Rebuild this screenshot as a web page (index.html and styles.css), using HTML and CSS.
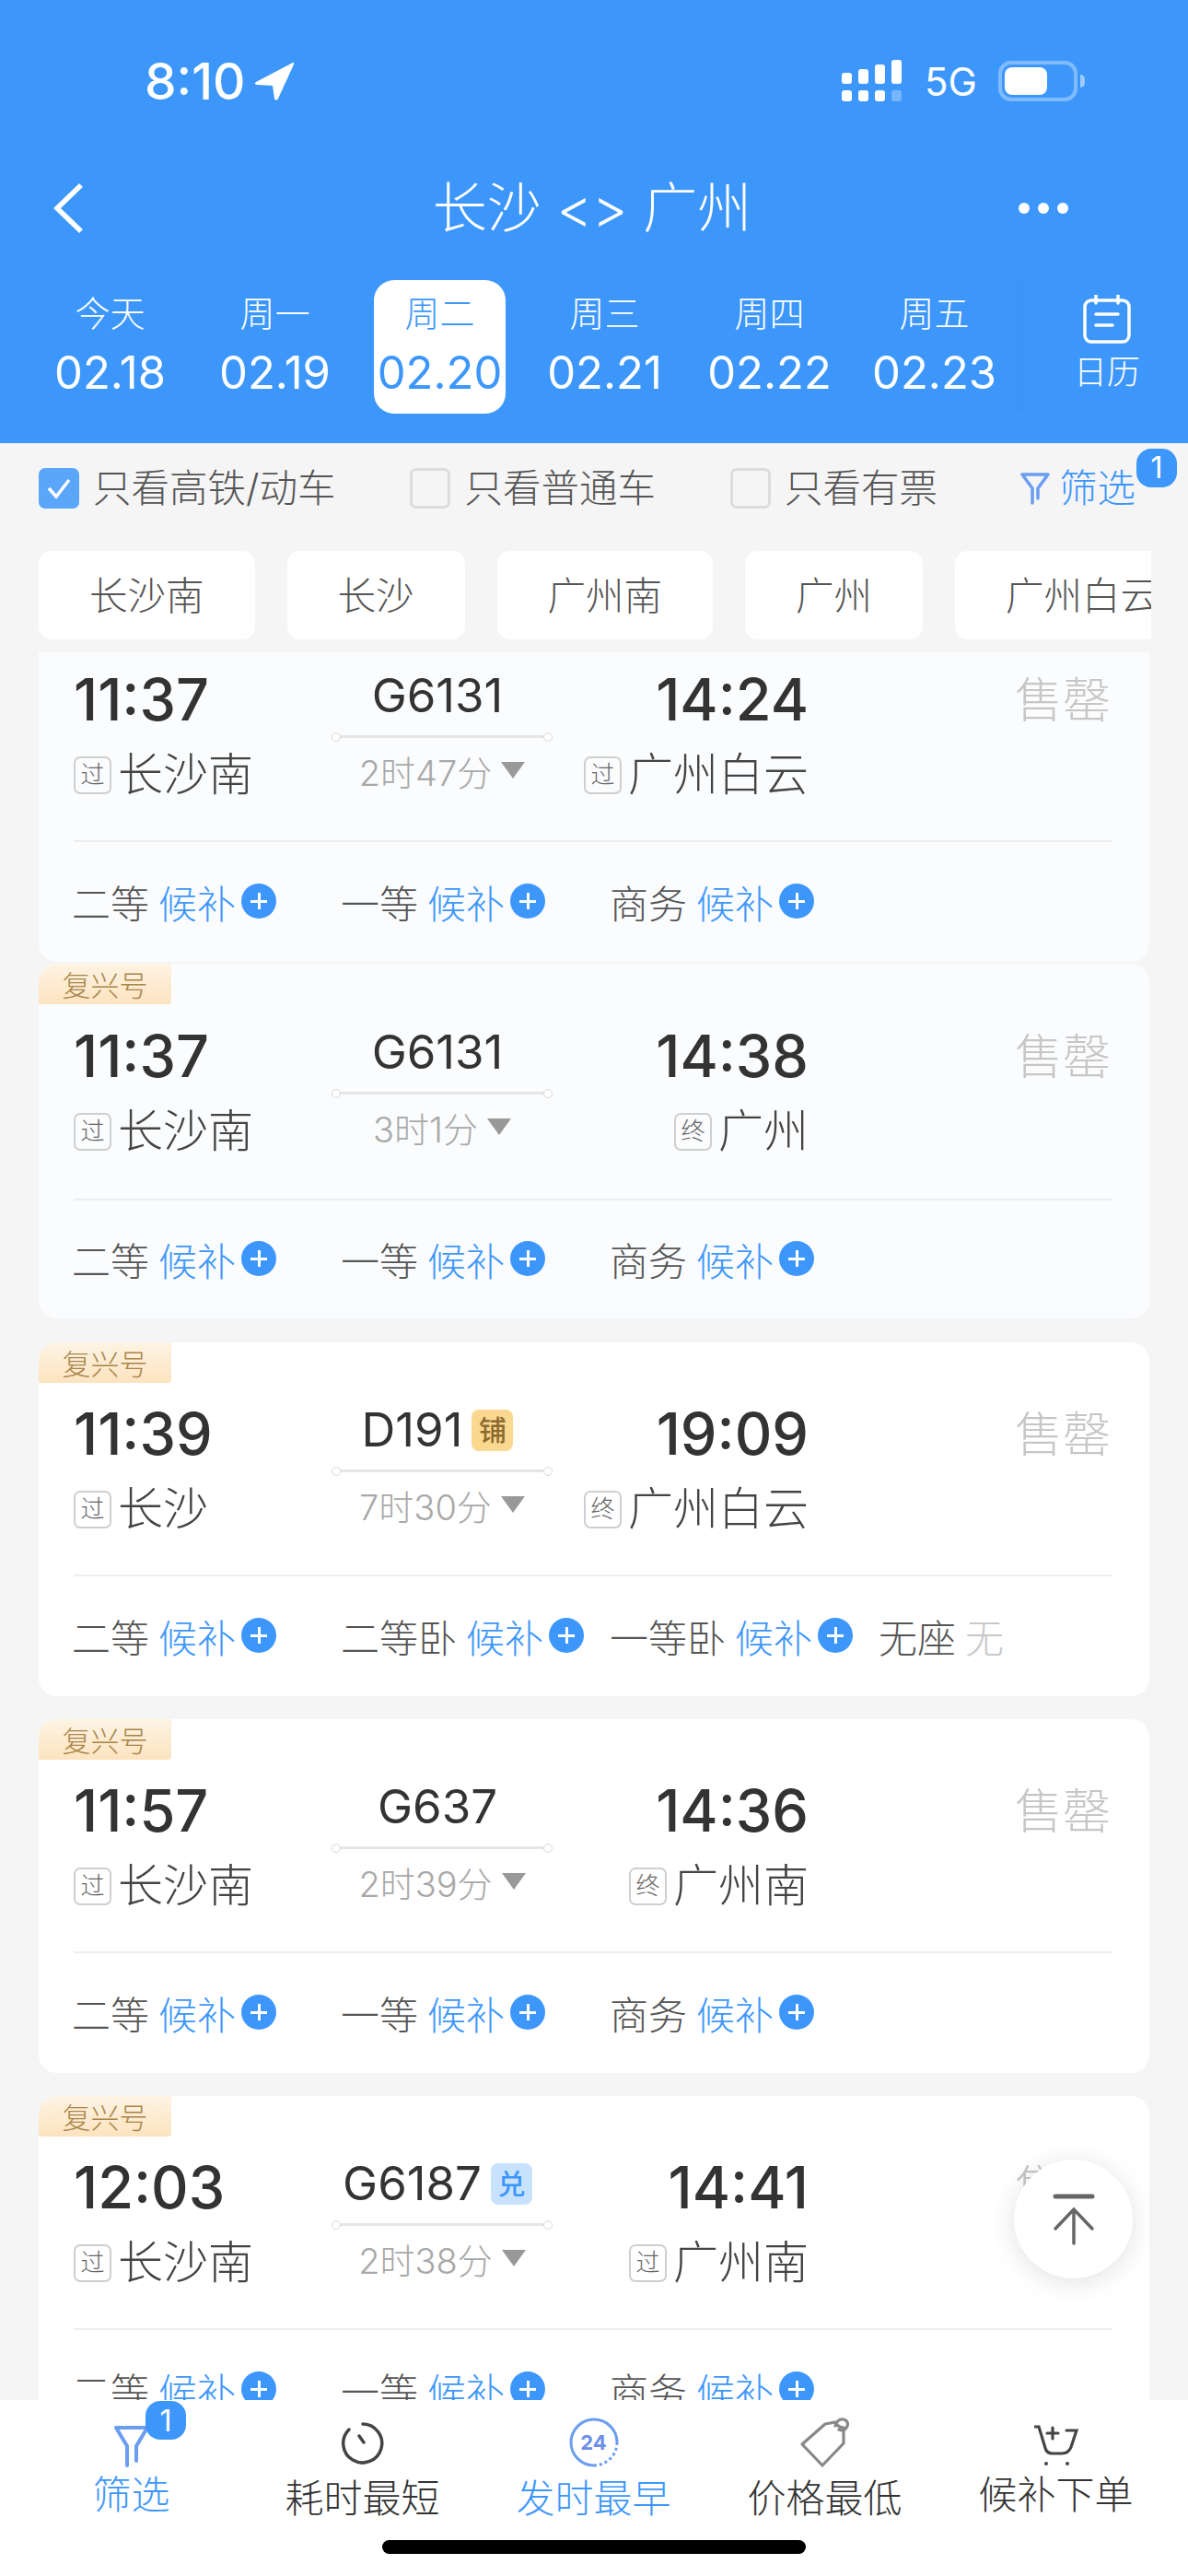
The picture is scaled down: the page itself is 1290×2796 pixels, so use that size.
FILE: index.html
```html
<!DOCTYPE html>
<html lang="zh-CN">
<head>
<meta charset="utf-8">
<title>长沙 &lt;&gt; 广州</title>
<link rel="stylesheet" href="styles.css">
</head>
<body>
<div class="page">
  <header class="header">
    <div class="status">
      <div class="clock">8:10</div>
      <svg class="loc" width="44" height="42" viewBox="0 0 44 42"><path d="M42 1 2 22c-2 1-1 3 1 3l17 1 2 14c0 2 3 2 4 0L43 3c.5-1.500-.5-2.500-1-2Z" fill="#fff"/></svg>
      <svg class="signal" width="66" height="46" viewBox="0 0 66 46" fill="#fff"><rect x="0" y="14" width="11" height="12" rx="3"/><rect x="18" y="10" width="11" height="16" rx="3"/><rect x="36" y="5" width="11" height="21" rx="3"/><rect x="54" y="0" width="11" height="26" rx="3"/><rect x="0" y="33" width="11" height="12" rx="3"/><rect x="18" y="33" width="11" height="12" rx="3"/><rect x="36" y="33" width="11" height="12" rx="3"/><rect x="54" y="33" width="11" height="12" rx="3" opacity=".3"/></svg>
      <div class="net">5G</div>
      <div class="battery"><div class="battery-fill"></div></div>
      <div class="battery-nub"></div>
    </div>
    <nav class="nav">
      <svg class="back" width="36" height="56" viewBox="0 0 36 56"><path d="M32 3 6 28l26 25" fill="none" stroke="#fff" stroke-width="5.500"/></svg>
      <div class="title">长沙 &lt;&gt; 广州</div>
      <div class="more"><i></i><i></i><i></i></div>
    </nav>
    <div class="tabs">
      <div class="tab"><div class="tab-day">今天</div><div class="tab-date">02.18</div></div>
      <div class="tab"><div class="tab-day">周一</div><div class="tab-date">02.19</div></div>
      <div class="tab tab-on"><div class="tab-day">周二</div><div class="tab-date">02.20</div></div>
      <div class="tab"><div class="tab-day">周三</div><div class="tab-date">02.21</div></div>
      <div class="tab"><div class="tab-day">周四</div><div class="tab-date">02.22</div></div>
      <div class="tab"><div class="tab-day">周五</div><div class="tab-date">02.23</div></div>
      <div class="cal">
        <svg width="54" height="54" viewBox="0 0 54 54" fill="none" stroke="#fff" stroke-width="3.500" stroke-linecap="round"><rect x="3" y="6" width="48" height="45" rx="7"/><path d="M15 1v8M39 1v8M15 21h24M15 33h18"/></svg>
        <div class="cal-text">日历</div>
      </div>
    </div>
  </header>

  <div class="filters">
    <label class="check check-first"><span class="box box-on"><svg width="28" height="24" viewBox="0 0 28 24"><path d="M3 12l8 9L25 3" fill="none" stroke="#fff" stroke-width="3.500"/></svg></span>只看高铁/动车</label>
    <label class="check check-next"><span class="box"></span>只看普通车</label>
    <label class="check check-next"><span class="box"></span>只看有票</label>
    <div class="filter-link">
      <svg width="32" height="36" viewBox="0 0 32 36" fill="none" stroke="#6b9df0" stroke-width="3.500" stroke-linejoin="round" stroke-linecap="round"><path d="M2 3h28L19 18v11M13 34V18L2 3"/></svg>
      筛选
      <span class="count count-top">1</span>
    </div>
  </div>

  <div class="chips">
    <div class="chip">长沙南</div>
    <div class="chip">长沙</div>
    <div class="chip">广州南</div>
    <div class="chip">广州</div>
    <div class="chip">广州白云</div>
  </div>

  <main class="list">
    <article class="card card-first card-tint">
      <div class="main">
        <div class="col"><div class="time">11:37</div><div class="station"><span class="mark">过</span>长沙南</div></div>
        <div class="mid"><div class="train">G6131</div><div class="rail"></div><div class="dur">2时47分<i class="tri"></i></div></div>
        <div class="col col-end"><div class="time">14:24</div><div class="station"><span class="mark">过</span>广州白云</div></div>
        <div class="sold">售罄</div>
      </div>
      <div class="seats">
        <div class="seat">二等<span class="wait">候补</span><i class="plus"></i></div>
        <div class="seat">一等<span class="wait">候补</span><i class="plus"></i></div>
        <div class="seat">商务<span class="wait">候补</span><i class="plus"></i></div>
      </div>
    </article>

    <article class="card card-tint card-wide">
      <div class="tag">复兴号</div>
      <div class="main">
        <div class="col"><div class="time">11:37</div><div class="station"><span class="mark">过</span>长沙南</div></div>
        <div class="mid"><div class="train">G6131</div><div class="rail"></div><div class="dur">3时1分<i class="tri"></i></div></div>
        <div class="col col-end"><div class="time">14:38</div><div class="station"><span class="mark">终</span>广州</div></div>
        <div class="sold">售罄</div>
      </div>
      <div class="seats">
        <div class="seat">二等<span class="wait">候补</span><i class="plus"></i></div>
        <div class="seat">一等<span class="wait">候补</span><i class="plus"></i></div>
        <div class="seat">商务<span class="wait">候补</span><i class="plus"></i></div>
      </div>
    </article>

    <article class="card">
      <div class="tag">复兴号</div>
      <div class="main">
        <div class="col"><div class="time">11:39</div><div class="station"><span class="mark">过</span>长沙</div></div>
        <div class="mid"><div class="train">D191<span class="kind kind-gold">铺</span></div><div class="rail"></div><div class="dur">7时30分<i class="tri"></i></div></div>
        <div class="col col-end"><div class="time">19:09</div><div class="station"><span class="mark">终</span>广州白云</div></div>
        <div class="sold">售罄</div>
      </div>
      <div class="seats">
        <div class="seat">二等<span class="wait">候补</span><i class="plus"></i></div>
        <div class="seat">二等卧<span class="wait">候补</span><i class="plus"></i></div>
        <div class="seat">一等卧<span class="wait">候补</span><i class="plus"></i></div>
        <div class="seat">无座<span class="none">无</span></div>
      </div>
    </article>

    <article class="card">
      <div class="tag">复兴号</div>
      <div class="main">
        <div class="col"><div class="time">11:57</div><div class="station"><span class="mark">过</span>长沙南</div></div>
        <div class="mid"><div class="train">G637</div><div class="rail"></div><div class="dur">2时39分<i class="tri"></i></div></div>
        <div class="col col-end"><div class="time">14:36</div><div class="station"><span class="mark">终</span>广州南</div></div>
        <div class="sold">售罄</div>
      </div>
      <div class="seats">
        <div class="seat">二等<span class="wait">候补</span><i class="plus"></i></div>
        <div class="seat">一等<span class="wait">候补</span><i class="plus"></i></div>
        <div class="seat">商务<span class="wait">候补</span><i class="plus"></i></div>
      </div>
    </article>

    <article class="card">
      <div class="tag">复兴号</div>
      <div class="main">
        <div class="col"><div class="time">12:03</div><div class="station"><span class="mark">过</span>长沙南</div></div>
        <div class="mid"><div class="train">G6187<span class="kind kind-blue">兑</span></div><div class="rail"></div><div class="dur">2时38分<i class="tri"></i></div></div>
        <div class="col col-end"><div class="time">14:41</div><div class="station"><span class="mark">过</span>广州南</div></div>
        <div class="sold">售罄</div>
      </div>
      <div class="seats">
        <div class="seat">二等<span class="wait">候补</span><i class="plus"></i></div>
        <div class="seat">一等<span class="wait">候补</span><i class="plus"></i></div>
        <div class="seat">商务<span class="wait">候补</span><i class="plus"></i></div>
      </div>
    </article>
  </main>

  <footer class="bar">
    <div class="bar-item bar-blue bar-raise">
      <span class="count count-bar">1</span>
      <svg width="40" height="46" viewBox="0 0 40 46" fill="none" stroke="#6b9df0" stroke-width="4" stroke-linecap="round" stroke-linejoin="round"><path d="M3 3h34L25 23v16M15 44V23L3 3"/></svg>
      <div class="bar-text">筛选</div>
    </div>
    <div class="bar-item">
      <svg width="48" height="54" viewBox="0 0 48 54" fill="none" stroke="#444" stroke-width="3.500" stroke-linecap="round"><path d="M9 13a21 21 0 1 0 15-6"/><path d="M20 20l5 7"/></svg>
      <div class="bar-text">耗时最短</div>
    </div>
    <div class="bar-item bar-blue">
      <div class="ring">
        <svg width="54" height="54" viewBox="0 0 54 54" fill="none" stroke="#6b9df0" stroke-width="3"><path d="M52 27A25 25 0 1 0 27 52"/><path d="M52 27A25 25 0 0 1 27 52" stroke-dasharray="3 3"/></svg>
        <span class="ring-text">24</span>
      </div>
      <div class="bar-text">发时最早</div>
    </div>
    <div class="bar-item">
      <svg width="56" height="54" viewBox="0 0 56 54" fill="none" stroke="#888" stroke-width="3.200" stroke-linejoin="round" stroke-linecap="round"><path d="M3 29 28 7l11-2c2 4 4 5 9 6v17L25 52Z"/><path d="M39 9c1-5 5-8 9-7s6 5 3 9-6 3-8 2"/></svg>
      <div class="bar-text">价格最低</div>
    </div>
    <div class="bar-item bar-raise">
      <svg width="48" height="46" viewBox="0 0 48 46" fill="none" stroke="#444" stroke-width="3.200" stroke-linecap="round"><path d="M1 2h4l7 23c1 4 3 6 8 6h10c5 0 8-2 10-7l6-18H35"/><path d="M20 3v12M14 9h12"/><circle cx="13" cy="42" r="2" fill="#444" stroke="none"/><circle cx="36" cy="42" r="2" fill="#444" stroke="none"/></svg>
      <div class="bar-text">候补下单</div>
    </div>
    <div class="home"></div>
  </footer>

  <div class="totop">
    <svg width="46" height="56" viewBox="0 0 46 56" fill="none" stroke="#666" stroke-linecap="round"><path d="M3 3h40" stroke-width="5"/><path d="M23 54V17M3 38 23 17l20 21" stroke-width="3.500"/></svg>
  </div>
</div>
</body>
</html>
```
FILE: styles.css
```css
* { box-sizing: border-box; }
html, body { margin: 0; padding: 0; }
body {
  width: 1290px;
  height: 2796px;
  overflow: hidden;
  font-family: Inter, "Noto Sans CJK SC", sans-serif;
  color: #444;
}
.page {
  position: relative;
  width: 1290px;
  height: 2796px;
  background: #f5f5f6;
  display: flex;
  flex-direction: column;
  overflow: hidden;
}

/* Header */
.header { height: 481px; background: #3d97fb; color: #fff; flex: none; }
.status { height: 176px; display: flex; align-items: center; padding: 0 0 0 157px; }
.clock { font-size: 55px; font-weight: 500; line-height: 60px; width: 119px; }
.signal { margin-left: 594px; }
.net { font-size: 42px; margin-left: 24px; width: 58px; }
.battery { width: 86px; height: 44px; margin-left: 22px; border: 4px solid rgba(255,255,255,.35); border-radius: 14px; padding: 3px; }
.battery-fill { width: 46px; height: 100%; background: #fff; border-radius: 8px; }
.battery-nub { width: 5px; height: 14px; margin-left: 3px; background: rgba(255,255,255,.5); border-radius: 0 6px 6px 0; }
.nav { height: 100px; display: flex; align-items: center; padding: 0 130px 0 56px; }
.back { flex: none; }
.title { flex: 1; text-align: center; font-size: 59px; font-weight: 300; line-height: 80px; padding-left: 88px; white-space: nowrap; }
.more { display: flex; gap: 9px; }
.more i { width: 12px; height: 12px; background: #fff; border-radius: 50%; display: block; }
.tabs { margin-top: 28px; padding-left: 30px; display: grid; grid-template-columns: repeat(6, 179px) 1fr; height: 145px; }
.tab { width: 143px; height: 145px; justify-self: center; padding-top: 11px; text-align: center; border-radius: 22px; }
.tab-day { font-size: 38px; line-height: 50px; font-weight: 300; white-space: nowrap; }
.tab-date { font-size: 49px; line-height: 66px; margin: 7px -10px 0; white-space: nowrap; }
.tab-on { background: #fff; color: #3d97fb; }
.cal { display: flex; flex-direction: column; align-items: center; padding: 16px 0 0 10px; background: linear-gradient(90deg, rgba(30,90,170,.07), rgba(30,90,170,0) 14px); height: 145px; }
.cal-text { font-size: 36px; line-height: 48px; margin-top: 6px; font-weight: 300; }

/* Filters */
.filters { height: 109px; padding-bottom: 11px; display: flex; align-items: center; position: relative; flex: none; }
.check { display: flex; align-items: center; font-size: 41.500px; color: #555; white-space: nowrap; font-weight: 300; line-height: 50px; }
.check-first { margin-left: 42px; }
.check-next { margin-left: 81px; }
.box { width: 44px; height: 44px; border: 3px solid #dcdcdc; border-radius: 7px; margin-right: 15px; flex: none; display: flex; align-items: center; justify-content: center; }
.box-on { background: #5aa6fb; border-color: #5aa6fb; }
.filter-link { display: flex; align-items: center; gap: 10px; margin-left: 90px; color: #3d97fb; font-size: 41.500px; line-height: 50px; font-weight: 300; }
.count { position: absolute; width: 44px; height: 42px; border-radius: 16px; background: #3d97fb; color: #fff; display: flex; align-items: center; justify-content: center; font-size: 32px; font-weight: 400; }
.count-top { left: 1234px; top: 6px; }

/* Chips */
.chips { display: flex; gap: 35px; margin: 8px 40px 0 42px; height: 96px; overflow: hidden; flex: none; }
.chip { flex: none; height: 96px; padding: 0 55px 4px; background: #fff; border-radius: 14px; font-size: 41.500px; font-weight: 300; color: #555; display: flex; align-items: center; white-space: nowrap; }

/* List */
.list { flex: 1; min-height: 0; margin: 14px 42px 0; overflow: hidden; }
.card { position: relative; height: 384px; margin-bottom: 25px; background: #fff; border-radius: 20px; padding: 0 40px 0 38px; }
.card-tint { background: #fbfcfe; }
.card-first { margin-top: -48px; margin-bottom: 2px; }
.card-wide { height: 385px; margin-bottom: 26px; }
.card-wide .main { height: 257px; padding-top: 62px; }
.card-wide .seats { height: 128px; }
.tag { position: absolute; left: 0; top: 0; width: 144px; height: 44px; background: linear-gradient(180deg, #fdf4e4, #fde3bf); color: #a8854a; font-size: 31px; font-weight: 300; border-radius: 20px 0 4px 0; display: flex; align-items: center; justify-content: center; padding-bottom: 2px; }
.main { height: 254px; padding-top: 61px; border-bottom: 2px solid #eeeeee; display: grid; grid-template-columns: 282px 236px 280px 1fr; align-items: start; }
.col { display: flex; flex-direction: column; }
.col-end { align-items: flex-end; }
.time { font-size: 63px; font-weight: 500; color: #333; line-height: 76px; }
.station { display: flex; align-items: center; font-size: 49px; font-weight: 300; line-height: 76px; height: 76px; margin-top: 6px; color: #444; white-space: nowrap; }
.mark { width: 41px; height: 41px; border: 2px solid #cfcfcf; border-radius: 7px; font-size: 26px; font-weight: 300; color: #666; display: flex; align-items: center; justify-content: center; margin-right: 7px; flex: none; }
.mid { display: flex; flex-direction: column; align-items: center; }
.train { height: 68px; display: flex; align-items: center; font-size: 51px; color: #333; font-weight: 400; line-height: 68px; white-space: nowrap; margin-right: 10px; }
.kind { width: 45px; height: 45px; border-radius: 8px; font-size: 30px; font-weight: 500; display: flex; align-items: center; justify-content: center; margin-left: 10px; }
.kind-gold { background: #fbd88f; color: #8a6a30; }
.kind-blue { background: #c9e2fc; color: #3d97fb; }
.rail { position: relative; width: 236px; height: 3px; background: #e6e6e6; margin-top: 9px; flex: none; }
.rail::before, .rail::after { content: ""; position: absolute; top: -3px; width: 8px; height: 8px; border: 1.500px solid #d8d8d8; background: #fff; border-radius: 50%; }
.rail::before { left: -2px; }
.rail::after { right: -2px; }
.dur { height: 70px; display: flex; align-items: center; font-size: 38px; font-weight: 300; color: #a8a8a8; white-space: nowrap; }
.tri { width: 0; height: 0; border-left: 13px solid transparent; border-right: 13px solid transparent; border-top: 18px solid #999; margin-left: 10px; }
.sold { justify-self: end; font-size: 52px; font-weight: 300; color: #c6c6c6; line-height: 76px; height: 76px; margin-top: 2px; margin-right: 2px; white-space: nowrap; }
.seats { height: 130px; margin-left: -2px; padding-bottom: 2px; display: grid; grid-template-columns: repeat(4, 292px); align-items: center; }
.seat { display: flex; align-items: center; font-size: 42px; font-weight: 300; color: #555; white-space: nowrap; }
.wait { color: #3d97fb; margin-left: 10px; }
.none { color: #c8c8c8; margin-left: 10px; }
.plus { position: relative; width: 38px; height: 38px; background: #3d97fb; border-radius: 50%; margin-left: 6px; flex: none; }
.plus::before, .plus::after { content: ""; position: absolute; background: #fff; }
.plus::before { left: 10px; right: 10px; top: 17.500px; height: 3px; }
.plus::after { top: 10px; bottom: 10px; left: 17.500px; width: 3px; }

/* Bottom bar */
.bar { position: relative; height: 191px; background: #fff; flex: none; padding-left: 17px; display: grid; grid-template-columns: repeat(5, 251px); align-items: start; }
.bar-item { position: relative; height: 133px; display: flex; flex-direction: column; align-items: center; justify-content: flex-end; color: #333; }
.bar-blue { color: #3d97fb; }
.bar-raise { height: 129px; }
.bar-text { font-size: 42px; font-weight: 300; line-height: 52px; height: 52px; margin-top: 8px; white-space: nowrap; }
.bar-raise .bar-text { margin-top: 4px; }
.bar-item svg { display: block; flex: none; }
.count-bar { left: 141px; top: 1px; z-index: 1; }
.ring { position: relative; width: 54px; height: 54px; }
.ring-text { position: absolute; inset: 0; display: flex; align-items: center; justify-content: center; font-size: 22px; font-weight: 700; color: #6b8fe8; }
.home { position: absolute; left: 415px; top: 152px; width: 460px; height: 15px; background: #000; border-radius: 8px; }

/* Back-to-top */
.totop { position: absolute; left: 1101px; top: 2344px; width: 129px; height: 129px; border-radius: 50%; background: #fff; box-shadow: 0 4px 28px rgba(0,0,0,.12); display: flex; align-items: center; justify-content: center; }
```
